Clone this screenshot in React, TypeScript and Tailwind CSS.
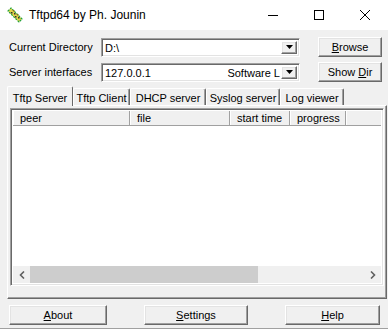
import React from 'react'

const raised =
  'border border-t-white border-l-white border-b-[#696969] border-r-[#696969] shadow-[inset_-1px_-1px_0_#a0a0a0,inset_1px_1px_0_#e3e3e3]'

const sunken =
  'border border-t-[#a0a0a0] border-l-[#a0a0a0] border-b-white border-r-white shadow-[inset_1px_1px_0_#696969,inset_-1px_-1px_0_#e3e3e3]'

function AppIcon() {
  return (
    <svg width="16" height="16" viewBox="0 0 16 16" className="shrink-0">
      <polygon points="1,4 4,1 15,12 12,15" fill="#e8d24a" stroke="#22a33a" strokeWidth="1.2" strokeDasharray="2 1" />
      <rect x="4" y="5" width="1.5" height="1.5" fill="#333" />
      <rect x="7" y="6" width="1.5" height="1.5" fill="#333" />
      <rect x="8" y="9" width="1.5" height="1.5" fill="#333" />
      <rect x="11" y="10" width="1.5" height="1.5" fill="#333" />
      <rect x="6" y="3" width="1.5" height="1.5" fill="#8a6d1c" />
      <rect x="10" y="7" width="1.5" height="1.5" fill="#8a6d1c" />
    </svg>
  )
}

function TitleBar() {
  return (
    <div className="flex h-[30px] items-center bg-white">
      <div className="ml-[7px] flex items-center">
        <AppIcon />
      </div>
      <span className="ml-[6px] text-[12px] text-black">Tftpd64 by Ph. Jounin</span>
      <div className="ml-auto flex h-full">
        <div className="flex w-[46px] items-center justify-center">
          <svg width="10" height="10" viewBox="0 0 10 10">
            <line x1="0" y1="5.5" x2="10" y2="5.5" stroke="#000" strokeWidth="1" />
          </svg>
        </div>
        <div className="flex w-[46px] items-center justify-center">
          <svg width="10" height="10" viewBox="0 0 10 10">
            <rect x="0.5" y="0.5" width="9" height="9" fill="none" stroke="#000" strokeWidth="1" />
          </svg>
        </div>
        <div className="flex w-[46px] items-center justify-center">
          <svg width="10" height="10" viewBox="0 0 10 10">
            <line x1="0" y1="0" x2="10" y2="10" stroke="#000" strokeWidth="1" />
            <line x1="10" y1="0" x2="0" y2="10" stroke="#000" strokeWidth="1" />
          </svg>
        </div>
      </div>
    </div>
  )
}

function DropArrow() {
  return (
    <div className={`flex h-full w-[16px] shrink-0 items-center justify-center bg-[#f0f0f0] ${raised}`}>
      <svg width="7" height="4" viewBox="0 0 7 4">
        <polygon points="0,0 7,0 3.5,4" fill="#000" />
      </svg>
    </div>
  )
}

function Combo({ value, extra }: { value: string; extra?: string }) {
  return (
    <div className={`flex h-[19px] w-[199px] items-stretch bg-white p-[2px] ${sunken}`}>
      <span className="pl-[1px] leading-[15px]">{value}</span>
      <span className="flex-1 overflow-hidden whitespace-nowrap pr-[1px] text-right leading-[15px]">{extra}</span>
      <DropArrow />
    </div>
  )
}

function Button({ width, children }: { width: string; children: React.ReactNode }) {
  return (
    <div className={`flex h-[20px] items-center justify-center bg-[#f0f0f0] ${raised} ${width}`}>
      {children}
    </div>
  )
}

function Tab({ label, active, width }: { label: string; active?: boolean; width: string }) {
  return (
    <div
      className={
        active
          ? `relative z-10 -mb-px flex h-[20px] items-start justify-center rounded-t-[2px] border-l border-t border-r border-l-white border-t-white border-r-[#696969] bg-[#f0f0f0] pt-[3px] ${width}`
          : `flex h-[17px] items-start justify-center rounded-t-[2px] border-l border-t border-r border-l-white border-t-white border-r-[#696969] pt-[1px] shadow-[inset_-1px_0_0_#a0a0a0] ${width}`
      }
    >
      {label}
    </div>
  )
}

function HeaderCell({ label, width }: { label: string; width: string }) {
  return (
    <div className={`h-full border-r border-r-[#a0a0a0] pl-[7px] leading-[14px] shadow-[inset_1px_0_0_#fff] ${width}`}>
      {label}
    </div>
  )
}

export default function App() {
  return (
    <div className="flex h-[330px] w-[388px] flex-col overflow-hidden bg-[#f0f0f0] font-['Liberation_Sans',Arial,sans-serif] text-[11px] text-black">
      <TitleBar />

      <div className="flex flex-1 flex-col">

        {/* top rows */}

        <div className="mt-[7px] flex h-[20px] items-center pl-[9px]">
          <span className="w-[92px]">Current Directory</span>
          <Combo value="D:\" />
          <div className="ml-[18px]">
            <Button width="w-[64px]">
              <span><span className="underline">B</span>rowse</span>
            </Button>
          </div>
        </div>

        <div className="mt-[5px] flex h-[20px] items-center pl-[9px]">
          <span className="w-[92px]">Server interfaces</span>
          <Combo value="127.0.0.1" extra="Software L" />
          <div className="ml-[18px]">
            <Button width="w-[64px]">
              <span>Show <span className="underline">D</span>ir</span>
            </Button>
          </div>
        </div>

        {/* tabs */}

        <div className="mt-[4px] flex h-[19px] items-end pl-[7px]">
          <Tab label="Tftp Server" active width="w-[66px]" />
          <Tab label="Tftp Client" width="w-[57px]" />
          <Tab label="DHCP server" width="w-[76px]" />
          <Tab label="Syslog server" width="w-[74px]" />
          <Tab label="Log viewer" width="w-[64px]" />
        </div>

        <div className="ml-[7px] h-[194px] w-[380px] border border-t-white border-l-white border-b-[#696969] border-r-[#696969] pl-[2px] pt-[2px] shadow-[inset_-1px_-1px_0_#a0a0a0]">

          <div className={`flex h-[178px] w-[374px] flex-col bg-white p-[2px] ${sunken}`}>

            <div className="flex h-[15px] border-b border-b-[#a0a0a0] bg-[#f0f0f0]">
              <HeaderCell label="peer" width="w-[117px]" />
              <HeaderCell label="file" width="w-[100px]" />
              <HeaderCell label="start time" width="w-[60px]" />
              <HeaderCell label="progress" width="w-[56px]" />
              <div className="h-full flex-1 shadow-[inset_1px_0_0_#fff]" />
            </div>

            <div className="flex-1" />

            <div className="flex h-[17px] bg-[#f0f0f0]">
              <div className="flex w-[17px] items-center justify-center">
                <svg width="6" height="8" viewBox="0 0 6 8">
                  <polyline points="5,0.5 1.5,4 5,7.5" fill="none" stroke="#606060" strokeWidth="1.6" />
                </svg>
              </div>
              <div className="my-[0px] w-[228px] bg-[#cdcdcd]" />
              <div className="flex-1" />
              <div className="flex w-[17px] items-center justify-center">
                <svg width="6" height="8" viewBox="0 0 6 8">
                  <polyline points="1,0.5 4.5,4 1,7.5" fill="none" stroke="#606060" strokeWidth="1.6" />
                </svg>
              </div>
            </div>

          </div>

        </div>

        {/* bottom buttons */}

        <div className="mt-[6px] flex pl-[9px]">
          <Button width="w-[98px]">
            <span><span className="underline">A</span>bout</span>
          </Button>
          <div className="ml-[37px]">
            <Button width="w-[104px]">
              <span><span className="underline">S</span>ettings</span>
            </Button>
          </div>
          <div className="ml-[37px]">
            <Button width="w-[95px]">
              <span><span className="underline">H</span>elp</span>
            </Button>
          </div>
        </div>

        <div className="mt-auto h-[2px] border-t border-t-[#a0a0a0] bg-white" />

      </div>
    </div>
  )
}
